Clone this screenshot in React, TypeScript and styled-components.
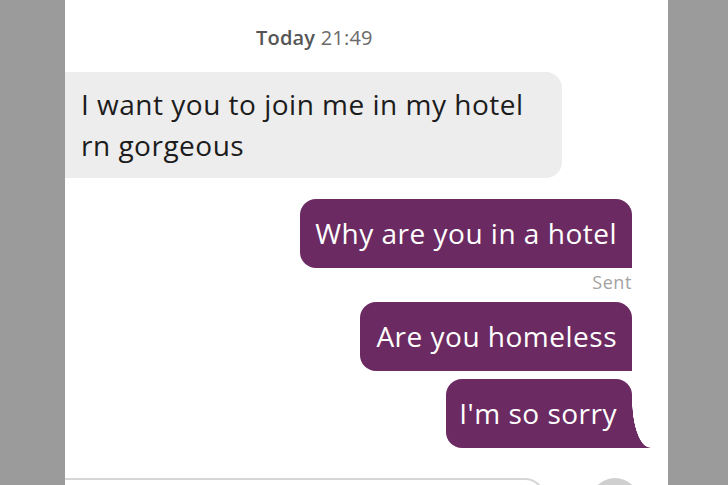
import React from "react";
import styled, { createGlobalStyle } from "styled-components";

const Global = createGlobalStyle`
  html, body { margin: 0; padding: 0; background: #9b9b9b; }
  body { font-family: "Open Sans", "Noto Sans", sans-serif; }
  #root { height: 485px; overflow: hidden; }
`;

const Panel = styled.div`
  margin-left: 65px;
  width: 603px;
  height: 485px;
  background: #ffffff;
  display: flex;
  flex-direction: column;
  overflow: hidden;
`;

const Stamp = styled.div`
  padding: 25px 0 0 191px;
  height: 72px;
  box-sizing: border-box;
  font-size: 20px;
  line-height: 26px;
  letter-spacing: 0.2px;
  color: #6a6a6a;
  b { font-weight: 600; color: #555; }
`;

const Row = styled.div<{ $out?: boolean; $gap?: number }>`
  display: flex;
  justify-content: ${(p) => (p.$out ? "flex-end" : "flex-start")};
  padding-right: ${(p) => (p.$out ? 36 : 0)}px;
  margin-top: ${(p) => p.$gap ?? 0}px;
`;

const Bubble = styled.div<{ $out?: boolean; $tail?: boolean; $w: number }>`
  position: relative;
  box-sizing: border-box;
  width: ${(p) => p.$w}px;
  background: ${(p) => (p.$out ? "#6b2a61" : "#ededed")};
  color: ${(p) => (p.$out ? "#ffffff" : "#1c1c1c")};
  font-size: 28px;
  letter-spacing: 0.5px;
  line-height: 41px;
  padding: ${(p) => (p.$out ? "14px 15px 14px 12px" : "12px 16px 12px 16px")};
  border-radius: ${(p) => (p.$out ? "16px 16px 0 16px" : "0 16px 16px 0")};
  text-align: ${(p) => (p.$out ? "right" : "left")};
  white-space: pre-line;
  ${(p) =>
    p.$tail
      ? `&::after {
      content: "";
      position: absolute;
      right: -18px;
      bottom: 0;
      width: 18px;
      height: 48px;
      background: radial-gradient(ellipse 100% 100% at 100% 0, transparent 98%, #6b2a61 100%);
    }`
      : ""}
`;

const Status = styled.div`
  text-align: right;
  padding-right: 36px;
  font-size: 18px;
  letter-spacing: 0.6px;
  line-height: 20px;
  margin-top: 4px;
  color: #a3a3a3;
`;

const Composer = styled.div`
  margin-top: auto;
  display: flex;
  align-items: flex-start;
  gap: 45px;
  height: 7px;
`;

const Input = styled.div`
  margin-left: -10px;
  width: 490px;
  height: 40px;
  border: 2px solid #d6d6d6;
  border-radius: 0 22px 22px 0;
  box-sizing: border-box;
`;

const SendBtn = styled.div`
  width: 50px;
  height: 50px;
  border-radius: 50%;
  background: #cfcfcf;
`;

export default function App() {
  return (
    <>
      <Global />
      <Panel>
        <Stamp>
          <b>Today</b> 21:49
        </Stamp>
        <Row>
          <Bubble $w={497}>{"I want you to join me in my hotel\nrn gorgeous"}</Bubble>
        </Row>
        <Row $out $gap={21}>
          <Bubble $out $w={332}>Why are you in a hotel</Bubble>
        </Row>
        <Status>Sent</Status>
        <Row $out $gap={10}>
          <Bubble $out $w={272}>Are you homeless</Bubble>
        </Row>
        <Row $out $gap={8}>
          <Bubble $out $tail $w={186}>I'm so sorry</Bubble>
        </Row>
        <Composer>
          <Input />
          <SendBtn />
        </Composer>
      </Panel>
    </>
  );
}
